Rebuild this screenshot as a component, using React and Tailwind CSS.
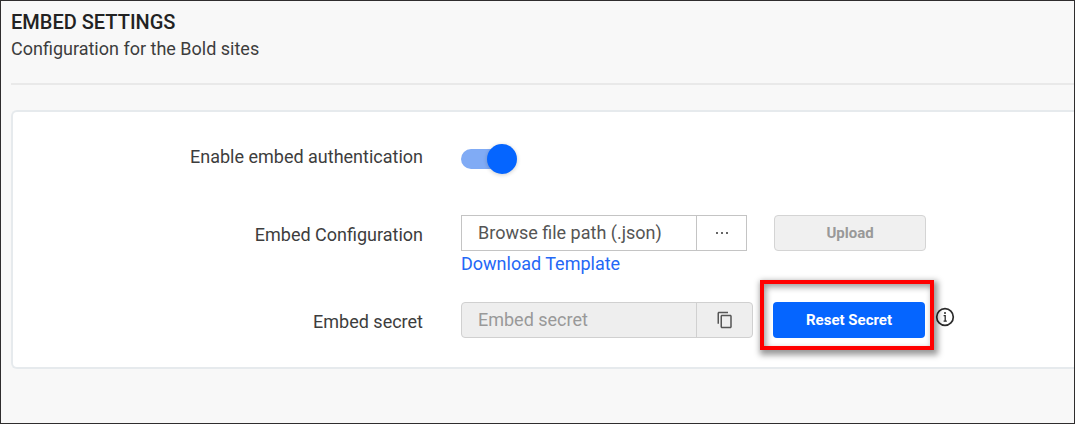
import { MdContentCopy } from "react-icons/md";

function Row({ label, htmlFor, children }) {
  return (
    <div className="flex items-start gap-[38px]">
      <label htmlFor={htmlFor} className="w-[410px] shrink-0 pt-1.5 text-right text-lg leading-7">
        {label}
      </label>
      {children}
    </div>
  );
}

function InfoIcon() {
  return (
    <svg viewBox="0 0 20 20" className="size-5" fill="none" stroke="#2b2b2b" aria-hidden="true">
      <circle cx="10" cy="10" r="8.3" strokeWidth="1.7" />
      <path d="M8.6 8.6h1.6v5.6M8.6 14.2h3.2" strokeWidth="1.3" />
      <circle cx="10" cy="5.9" r="1" fill="#2b2b2b" stroke="none" />
    </svg>
  );
}

export default function App() {
  return (
    <div className="min-h-screen overflow-hidden border border-[#2f2d2e] bg-[#f8f8f8] pl-2.5 font-['Roboto',sans-serif] text-[#3d3d3d]">
      <header className="border-b-2 border-[#e9e9e9] pt-2 pb-[21px]">
        <h1 className="text-xl leading-[27px] font-medium text-[#222]">EMBED SETTINGS</h1>
        <p className="text-lg leading-[26px]">Configuration for the Bold sites</p>
      </header>

      <main className="mt-[25px] rounded-l-md border-2 border-r-0 border-[#e6eaed] bg-white pt-[25px] pb-[29px]">
        <form className="flex flex-col" onSubmit={(e) => e.preventDefault()}>
          <Row label="Enable embed authentication" htmlFor="embed-auth">
            <span className="relative mt-3 flex h-5 w-14 items-center">
              <input
                id="embed-auth"
                type="checkbox"
                role="switch"
                defaultChecked
                className="peer h-5 w-[52px] cursor-pointer appearance-none rounded-full bg-[#b8b8b8] checked:bg-[#80abf5]"
              />
              <span className="pointer-events-none absolute top-1/2 left-0 size-[30px] -translate-y-1/2 rounded-full bg-[#0565ff] shadow-[0_1px_4px_rgba(0,0,0,0.2)] peer-checked:right-0 peer-checked:left-auto" />
            </span>
          </Row>

          <div className="mt-11">
            <Row label="Embed Configuration" htmlFor="config-path">
              <div className="flex items-start gap-[27px]">
                <div>
                  <div className="flex h-9 w-[286px]">
                    <input
                      id="config-path"
                      type="text"
                      readOnly
                      placeholder="Browse file path (.json)"
                      className="min-w-0 flex-1 border border-[#c4c4c4] px-4 text-lg placeholder:text-[#555] placeholder:opacity-100"
                    />
                    <button type="button" aria-label="Browse" className="flex w-[50px] items-center justify-center gap-[3px] border border-l-0 border-[#c4c4c4]">
                      <span className="size-0.5 bg-[#666]" />
                      <span className="size-0.5 bg-[#666]" />
                      <span className="size-0.5 bg-[#666]" />
                    </button>
                  </div>
                  <a href="#template" className="block text-lg leading-[26px] text-[#2468f6]">
                    Download Template
                  </a>
                </div>
                <button type="button" disabled className="h-9 w-[152px] rounded border border-[#d4d4d4] bg-[#f0f0f0] text-[15px] font-bold text-[#999]">
                  Upload
                </button>
              </div>
            </Row>
          </div>

          <div className="mt-[25px]">
            <Row label="Embed secret" htmlFor="embed-secret">
              <div className="flex items-start">
                <div className="flex h-9 w-[292px] overflow-hidden rounded border border-[#d0d0d0] bg-[#eee]">
                  <input
                    id="embed-secret"
                    type="text"
                    readOnly
                    placeholder="Embed secret"
                    className="min-w-0 flex-1 px-4 text-lg placeholder:text-[#999] placeholder:opacity-100"
                  />
                  <button type="button" aria-label="Copy secret" className="flex w-14 items-center justify-center border-l border-[#d0d0d0] text-[#555]">
                    <MdContentCopy className="size-[18px]" />
                  </button>
                </div>
                <div className="relative ml-5 flex">
                  <button type="button" className="h-9 w-[152px] rounded bg-[#0565ff] text-[15px] font-bold text-white">
                    Reset Secret
                  </button>
                  <span className="pointer-events-none absolute -top-[22px] -right-[9px] -bottom-3 -left-[13px] border-4 border-[#f00] shadow-[2px_3px_6px_2px_rgba(0,0,0,0.4),inset_2px_3px_6px_rgba(0,0,0,0.4)]" />
                </div>
                <button type="button" aria-label="About the embed secret" className="mt-[5px] ml-2.5">
                  <InfoIcon />
                </button>
              </div>
            </Row>
          </div>
        </form>
      </main>
    </div>
  );
}
